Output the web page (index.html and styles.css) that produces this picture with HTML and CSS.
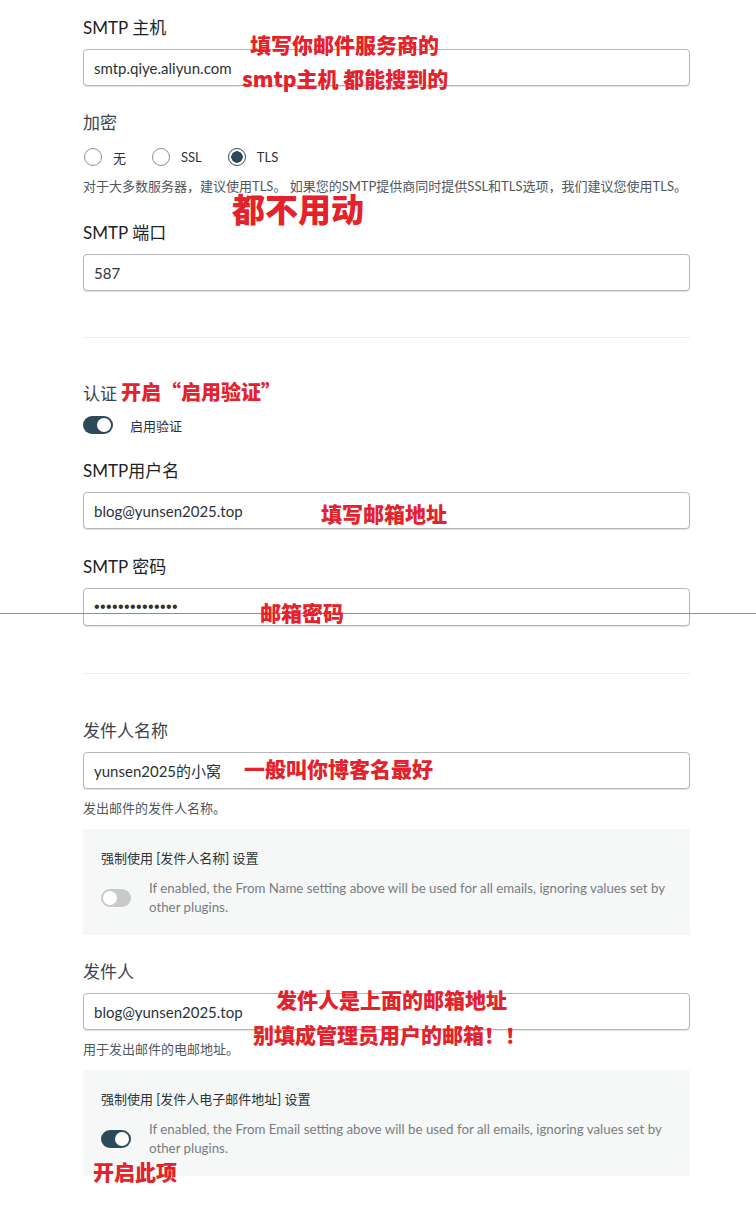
FILE: index.html
```html
<!DOCTYPE html>
<html lang="zh-CN">
<head>
  <meta charset="UTF-8" />
  <meta name="viewport" content="width=device-width, initial-scale=1.0" />
  <title>SMTP 设置</title>
  <link rel="stylesheet" href="styles.css">
</head>
<body>
  <div class="page">
    <div class="field">
      <div class="label strong">SMTP 主机</div>
      <input class="input" type="text" value="smtp.qiye.aliyun.com" />
      <span class="note note-host-1">填写你邮件服务商的</span>
      <span class="note note-host-2">smtp主机 都能搜到的</span>
    </div>

    <div class="field gap-sm">
      <div class="label">加密</div>
      <div class="radios">
        <span class="radio"></span><span class="radio-text">无</span>
        <span class="radio"></span><span class="radio-text">SSL</span>
        <span class="radio checked"></span><span class="radio-text">TLS</span>
      </div>
      <p class="help">对于大多数服务器，建议使用TLS。 如果您的SMTP提供商同时提供SSL和TLS选项，我们建议您使用TLS。</p>
      <span class="note note-big">都不用动</span>
    </div>

    <div class="field gap-md">
      <div class="label strong">SMTP 端口</div>
      <input class="input" type="text" value="587" />
    </div>

    <hr class="divider" />

    <div class="field gap-lg">
      <div class="label">认证</div>
      <div class="switch-row">
        <span class="switch on"></span>
        <span class="switch-text">启用验证</span>
      </div>
      <span class="note note-auth">开启“启用验证”</span>
    </div>

    <div class="field gap-sm">
      <div class="label strong">SMTP用户名</div>
      <input class="input" type="text" value="blog@yunsen2025.top" />
      <span class="note note-user">填写邮箱地址</span>
    </div>

    <div class="field gap-md">
      <div class="label strong">SMTP 密码</div>
      <input class="input password" type="password" value="abcdefghijklmn" />
      <span class="note note-pass">邮箱密码</span>
    </div>

    <hr class="divider divider-tall" />

    <div class="field gap-xl">
      <div class="label">发件人名称</div>
      <input class="input" type="text" value="yunsen2025的小窝" />
      <p class="help">发出邮件的发件人名称。</p>
      <div class="force-box">
        <div class="force-title">强制使用 [发件人名称] 设置</div>
        <div class="force-row">
          <span class="switch"></span>
          <span class="force-desc">If enabled, the From Name setting above will be used for all emails, ignoring values set by other plugins.</span>
        </div>
      </div>
      <span class="note note-name">一般叫你博客名最好</span>
    </div>

    <div class="field gap-sm">
      <div class="label">发件人</div>
      <input class="input" type="text" value="blog@yunsen2025.top" />
      <p class="help">用于发出邮件的电邮地址。</p>
      <div class="force-box">
        <div class="force-title">强制使用 [发件人电子邮件地址] 设置</div>
        <div class="force-row">
          <span class="switch on"></span>
          <span class="force-desc">If enabled, the From Email setting above will be used for all emails, ignoring values set by other plugins.</span>
        </div>
      </div>
      <span class="note note-from-1">发件人是上面的邮箱地址</span>
      <span class="note note-from-2">别填成管理员用户的邮箱！！</span>
      <span class="note note-force">开启此项</span>
    </div>
  </div>

  <!-- stray line from the screenshot -->
  <div class="scan-line"></div>
</body>
</html>
```

FILE: styles.css
```css
body {
  margin: 0;
  background: #fff;
  color: #3c434a;
  font-family: Lato, "Noto Sans CJK SC", sans-serif;
  position: relative;
}
.page {
  width: 607px;
  padding: 17px 0 30px 83px;
}
.field {
  position: relative;
}
.gap-sm {
  margin-top: 26px;
}
.gap-md {
  margin-top: 27px;
}
.gap-lg {
  margin-top: 45px;
}
.gap-xl {
  margin-top: 46px;
}
.label {
  font-size: 17px;
  line-height: 22px;
  color: #3c434a;
  margin-bottom: 10px;
}
.label.strong {
  color: #1d2327;
}
.input {
  display: block;
  box-sizing: border-box;
  width: 100%;
  height: 37px;
  margin: 0;
  padding: 0 10px;
  border: 1px solid #b4b6b9;
  border-radius: 4px;
  box-shadow: 0 1px 1px rgba(0, 0, 0, 0.12);
  font: 15px Lato, "Noto Sans CJK SC", sans-serif;
  color: #2c3338;
  background: #fff;
  outline: none;
}
.input.password {
  height: 38px;
  font: 16px "Liberation Sans", sans-serif;
  letter-spacing: 0.4px;
}
.radios {
  display: flex;
  align-items: center;
  height: 20px;
  margin-top: 13px;
  font-size: 13px;
  color: #2c3338;
}
.radio {
  box-sizing: border-box;
  width: 18px;
  height: 18px;
  border: 1px solid #8c8f94;
  border-radius: 50%;
  margin-left: 1px;
}
.radio.checked {
  border-color: #2c4a5a;
  background: radial-gradient(circle, #2c4a5a 0 5.5px, #fff 6px);
}
.radio-text {
  margin: 0 25px 0 11px;
}
.help {
  margin: 10px 0 0;
  font-size: 13px;
  line-height: 18px;
  color: #50575e;
}
.divider {
  border: 0;
  border-top: 1px solid #ebedef;
  margin: 46px 0 0;
}
.divider-tall {
  margin-top: 47px;
}
.label + .switch-row {
  margin-top: -10px;
}
.switch-row {
  display: flex;
  align-items: center;
  height: 18px;
  padding-top: 11px;
}
.switch {
  position: relative;
  flex: none;
  width: 30px;
  height: 18px;
  border-radius: 9px;
  background: #c8c9cb;
}
.switch::after {
  content: "";
  position: absolute;
  top: 2px;
  left: 2px;
  width: 14px;
  height: 14px;
  border-radius: 50%;
  background: #fff;
}
.switch.on {
  background: #2c4a5a;
}
.switch.on::after {
  left: 14px;
}
.switch-text {
  margin-left: 17px;
  font-size: 13px;
  color: #2c3338;
}
.force-box {
  margin-top: 12px;
  padding: 20px 18px 18px;
  background: #f6f7f7;
}
.force-title {
  font-size: 13px;
  line-height: 18px;
  color: #2c3338;
}
.force-row {
  display: flex;
  align-items: center;
  margin-top: 12px;
}
.force-desc {
  margin-left: 18px;
  font-size: 13.3px;
  line-height: 19px;
  color: #787c82;
}

/* red hand-written notes */
.note {
  position: absolute;
  z-index: 2;
  white-space: nowrap;
  font-family: "Noto Sans CJK SC", sans-serif;
  font-weight: 900;
  font-size: 21px;
  line-height: 28px;
  color: #e3222b;
}
.note-host-1 { top: 13px; left: 167px; }
.note-host-2 { top: 47px; left: 159px; }
.note-big { top: 76px; left: 149px; font-size: 33px; line-height: 40px; }
.note-auth { top: -4px; left: 38px; font-size: 20px; line-height: 26px; }
.note-user { top: 39px; left: 238px; }
.note-pass { top: 42px; left: 177px; }
.note-name { top: 34px; left: 161px; }
.note-from-1 { top: 24px; left: 193px; }
.note-from-2 { top: 59px; left: 170px; }
.note-force { top: 196px; left: 10px; }

.scan-line {
  position: absolute;
  top: 613px;
  left: 0;
  width: 756px;
  height: 1px;
  background: #8f8f8f;
  z-index: 1;
}
```
